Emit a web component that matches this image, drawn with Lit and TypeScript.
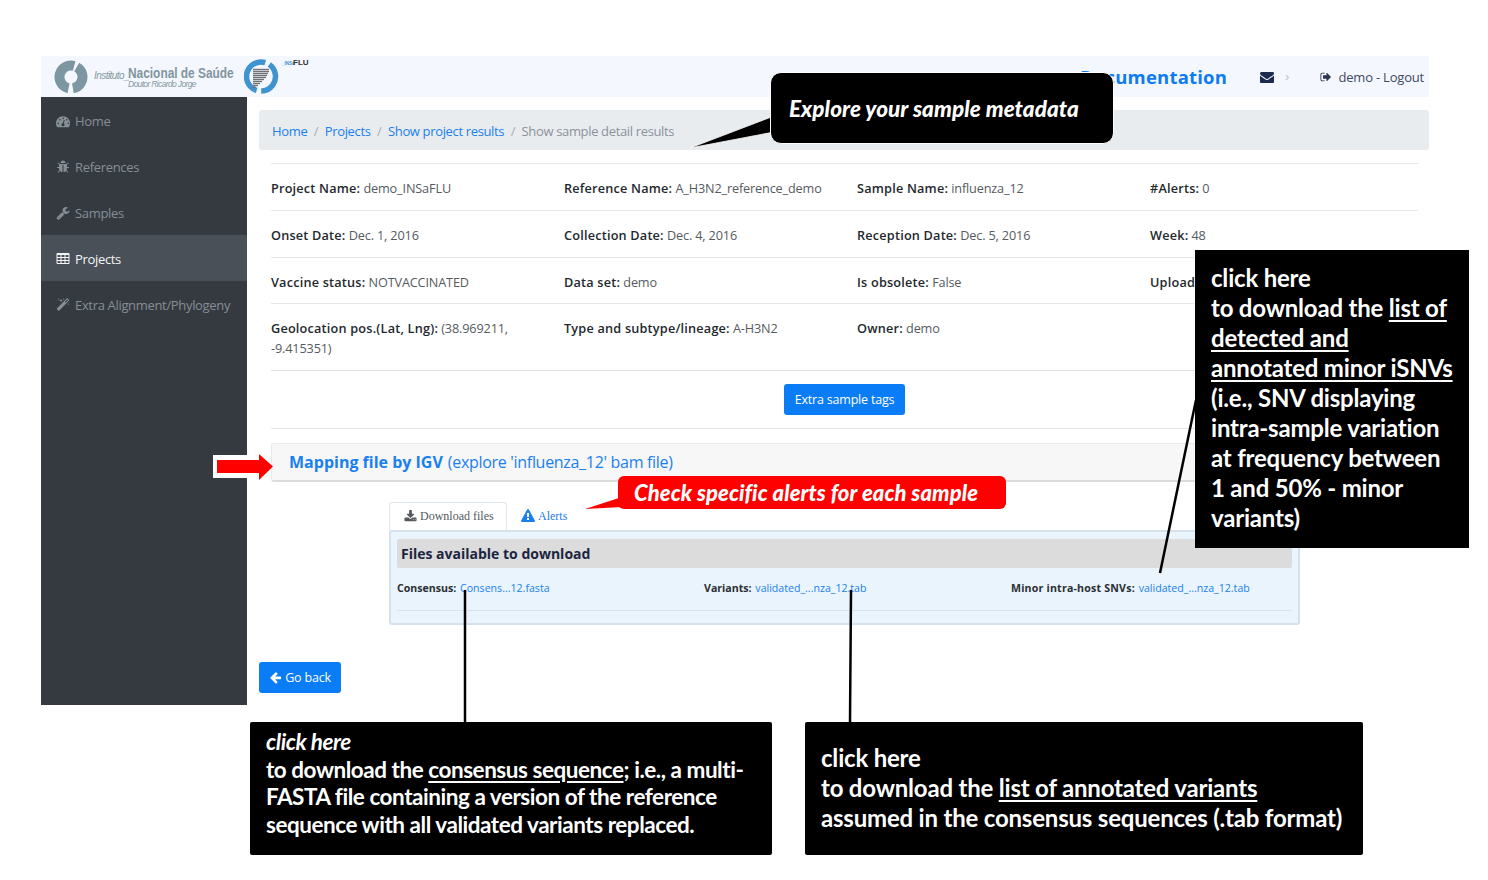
import { LitElement, html, css, svg } from "lit";
import { customElement } from "lit/decorators.js";

const P: Record<string, string> = {
  dashboard: "M384 1184q0-40-28-68t-68-28-68 28-28 68 28 68 68 28 68-28 28-68zm192-448q0-40-28-68t-68-28-68 28-28 68 28 68 68 28 68-28 28-68zm428 481l101-382q6-26-7.500-48.500t-38.500-29.500-48 6.500-30 39.500l-101 382q-60 5-107 43.500t-63 98.500q-20 77 20 146t117 89 146-20 89-117q16-60-6-117t-72-91zm660-33q0-40-28-68t-68-28-68 28-28 68 28 68 68 28 68-28 28-68zm-640-640q0-40-28-68t-68-28-68 28-28 68 28 68 68 28 68-28 28-68zm448 192q0-40-28-68t-68-28-68 28-28 68 28 68 68 28 68-28 28-68zm320 448q0 261-141 483-19 29-54 29h-1402q-35 0-54-29-141-221-141-483 0-182 71-348t191-286 286-191 348-71 348 71 286 191 191 286 71 348z",
  bug: "M1696 960q0 26-19 45t-45 19h-224q0 171-67 290l208 209q19 19 19 45t-19 45q-18 19-45 19t-45-19l-198-197q-5 5-15 13t-42 28.500-65 36.500-82 29-97 13v-896h-128v896q-51 0-101.500-13.500t-87-33-66-39-43.500-32.500l-15-14-183 207q-20 21-48 21-24 0-43-16-19-18-20.500-44.500t15.500-46.500l202-227q-58-114-58-274h-224q-26 0-45-19t-19-45 19-45 45-19h224v-294l-173-173q-19-19-19-45t19-45 45-19 45 19l173 173h844l173-173q19-19 45-19t45 19 19 45-19 45l-173 173v294h224q26 0 45 19t19 45zm-480-576h-640q0-133 93.500-226.500t226.500-93.500 226.500 93.500 93.500 226.500z",
  wrench: "M448 1472q0-26-19-45t-45-19-45 19-19 45 19 45 45 19 45-19 19-45zm644-420l-682 682q-37 37-90 37-52 0-91-37l-106-108q-38-36-38-90 0-53 38-91l681-681q39 98 114.500 173.500t173.500 114.500zm634-435q0 39-23 106-47 134-164.500 217.500t-258.500 83.500q-185 0-316.500-131.500t-131.500-316.500 131.500-316.500 316.500-131.500q58 0 121.500 16.500t107.500 46.500q16 11 16 28t-16 28l-293 169v224l193 107q5-3 79-48.500t135.500-81 70.500-35.500q15 0 23.500 10t8.500 25z",
  table: "M576 1376v-192q0-14-9-23t-23-9h-320q-14 0-23 9t-9 23v192q0 14 9 23t23 9h320q14 0 23-9t9-23zm0-384v-192q0-14-9-23t-23-9h-320q-14 0-23 9t-9 23v192q0 14 9 23t23 9h320q14 0 23-9t9-23zm512 384v-192q0-14-9-23t-23-9h-320q-14 0-23 9t-9 23v192q0 14 9 23t23 9h320q14 0 23-9t9-23zm-512-768v-192q0-14-9-23t-23-9h-320q-14 0-23 9t-9 23v192q0 14 9 23t23 9h320q14 0 23-9t9-23zm512 384v-192q0-14-9-23t-23-9h-320q-14 0-23 9t-9 23v192q0 14 9 23t23 9h320q14 0 23-9t9-23zm512 384v-192q0-14-9-23t-23-9h-320q-14 0-23 9t-9 23v192q0 14 9 23t23 9h320q14 0 23-9t9-23zm-512-768v-192q0-14-9-23t-23-9h-320q-14 0-23 9t-9 23v192q0 14 9 23t23 9h320q14 0 23-9t9-23zm512 384v-192q0-14-9-23t-23-9h-320q-14 0-23 9t-9 23v192q0 14 9 23t23 9h320q14 0 23-9t9-23zm0-384v-192q0-14-9-23t-23-9h-320q-14 0-23 9t-9 23v192q0 14 9 23t23 9h320q14 0 23-9t9-23zm128-320v1088q0 66-47 113t-113 47h-1344q-66 0-113-47t-47-113v-1088q0-66 47-113t113-47h1344q66 0 113 47t47 113z",
  magic: "M1254 581l293-293-107-107-293 293zm447-293q0 27-18 45l-1286 1286q-18 18-45 18t-45-18l-198-198q-18-18-18-45t18-45l1286-1286q18-18 45-18t45 18l198 198q18 18 18 45zm-1351-190l98 30-98 30-30 98-30-98-98-30 98-30 30-98zm350 162l196 60-196 60-60 196-60-196-196-60 196-60 60-196zm930 478l98 30-98 30-30 98-30-98-98-30 98-30 30-98zm-640-640l98 30-98 30-30 98-30-98-98-30 98-30 30-98z",
  envelope: "M1792 710v794q0 66-47 113t-113 47h-1472q-66 0-113-47t-47-113v-794q44 49 101 87 362 246 497 345 57 42 92.500 65.500t94.500 48 110 24.500h2q51 0 110-24.500t94.500-48 92.500-65.500q170-123 498-345 57-39 100-87zm0-294q0 79-49 151t-122 123q-376 261-468 325-10 7-42.500 30.500t-54 38-52 32.500-57.500 27-50 9h-2q-23 0-50-9t-57.500-27-52-32.500-54-38-42.500-30.500q-91-64-262-182.500t-205-142.500q-62-42-117-115.500t-55-136.500q0-78 41.500-130t118.500-52h1472q65 0 112.500 47t47.500 113z",
  signout: "M704 1440q0 4 1 20t.5 26.500-3 23.500-10 19.500-20.500 6.500h-320q-119 0-203.500-84.500t-84.500-203.500v-704q0-119 84.500-203.500t203.500-84.500h320q13 0 22.500 9.500t9.500 22.500q0 4 1 20t.5 26.500-3 23.500-10 19.500-20.500 6.500h-320q-66 0-113 47t-47 113v704q0 66 47 113t113 47h312l11.500 1 11.500 3 8 5.500 7 9 2 13.500zm928-544q0 26-19 45l-544 544q-19 19-45 19t-45-19-19-45v-288h-448q-26 0-45-19t-19-45v-384q0-26 19-45t45-19h448v-288q0-26 19-45t45-19 45 19l544 544q19 19 19 45z",
  download: "M1344 1344q0-26-19-45t-45-19-45 19-19 45 19 45 45 19 45-19 19-45zm256 0q0-26-19-45t-45-19-45 19-19 45 19 45 45 19 45-19 19-45zm128-224v320q0 40-28 68t-68 28h-1472q-40 0-68-28t-28-68v-320q0-40 28-68t68-28h465l135 136q58 56 136 56t136-56l136-136h464q40 0 68 28t28 68zm-325-569q17 41-14 70l-448 448q-18 19-45 19t-45-19l-448-448q-31-29-14-70 17-39 59-39h256v-448q0-26 19-45t45-19h256q26 0 45 19t19 45v448h256q42 0 59 39z",
  warning: "M1024 1375v-190q0-14-9.500-23.500t-22.500-9.500h-192q-13 0-22.500 9.500t-9.500 23.500v190q0 14 9.500 23.500t22.500 9.500h192q13 0 22.500-9.500t9.500-23.500zm-2-374l18-459q0-12-10-19-13-11-24-11h-220q-11 0-24 11-10 7-10 21l17 457q0 10 10 16.500t24 6.500h185q14 0 23.500-6.500t10.500-16.500zm-14-934l768 1408q35 63-2 126-17 29-46.500 46t-63.500 17h-1536q-34 0-63.500-17t-46.500-46q-37-63-2-126l768-1408q17-31 47-49t65-18 65 18 47 49z",
  arrowleft: "M1664 896v128q0 53-32.500 90.500t-84.500 37.500h-704l293 294q38 36 38 90t-38 90l-75 76q-37 37-90 37-52 0-91-37l-651-652q-37-37-37-90 0-52 37-91l651-650q38-38 91-38 52 0 90 38l75 74q38 38 38 91t-38 91l-293 293h704q52 0 84.500 37.500t32.500 90.500z",
};

const icon = (n: string, size = 14) =>
  html`<svg class="ic" width=${size} height=${size} viewBox="0 0 1792 1792" fill="currentColor">${svg`<path d=${P[n]}></path>`}</svg>`;

const rows: [string, string][][] = [
  [["Project Name:", "demo_INSaFLU"], ["Reference Name:", "A_H3N2_reference_demo"], ["Sample Name:", "influenza_12"], ["#Alerts:", "0"]],
  [["Onset Date:", "Dec. 1, 2016"], ["Collection Date:", "Dec. 4, 2016"], ["Reception Date:", "Dec. 5, 2016"], ["Week:", "48"]],
  [["Vaccine status:", "NOTVACCINATED"], ["Data set:", "demo"], ["Is obsolete:", "False"], ["Upload", ""]],
  [["Geolocation pos.(Lat, Lng):", "(38.969211, -9.415351)"], ["Type and subtype/lineage:", "A-H3N2"], ["Owner:", "demo"], ["", ""]],
];

const nav = [
  ["dashboard", "Home"],
  ["bug", "References"],
  ["wrench", "Samples"],
  ["table", "Projects"],
  ["magic", "Extra Alignment/Phylogeny"],
];

const stripes = [25, 25, 24, 23, 22, 20, 18, 16, 14, 12];

@customElement("app-root")
export class AppRoot extends LitElement {
  static styles = css`
    :host { display: block; position: relative; width: 1488px; height: 880px; background: #fff; overflow: hidden; font-family: "Open Sans", sans-serif; color: #3a3f45; }
    .ic { display: block; flex: none; }
    a { color: #1a80f0; text-decoration: none; }
    .app { position: absolute; left: 41px; top: 56px; width: 1388px; height: 649px; display: flex; flex-direction: column; }
    header { height: 41px; flex: none; background: #f5f7ff; display: flex; align-items: flex-start; }
    .logos { display: flex; align-items: flex-start; }
    .inst { width: 34px; height: 34px; margin: 4px 0 0 13px; flex: none; }
    .instxt { margin: 8px 0 0 6px; width: 144px; height: 30px; color: #83979f; font-family: "Liberation Sans", sans-serif; white-space: nowrap; flex: none; }
    .instxt .a { font-size: 10px; font-style: italic; letter-spacing: -.55px; margin-top: 6px; display: inline-block; vertical-align: top; width: 34px; }
    .instxt .b { font-size: 14.5px; font-weight: 700; display: inline-block; vertical-align: top; margin-top: 1px; transform: scaleX(.82); transform-origin: left; color: #7f959e; }
    .instxt .c { font-size: 8.5px; font-style: italic; letter-spacing: -.65px; display: block; margin: -3px 0 0 34px; }
    .flu { width: 66px; height: 38px; margin: 2px 0 0 6px; flex: none; }
    .hright { margin-left: auto; display: flex; align-items: center; height: 41px; padding-right: 5px; }
    .doc { font-size: 18.5px; font-weight: 700; color: #0d7bf2; letter-spacing: .2px; white-space: nowrap; }
    .env { color: #1b2a4e; margin-left: 33px; }
    .chev { color: #b9bfc9; font-size: 13px; margin: 0 31px 0 11px; font-family: "Liberation Sans", sans-serif; }
    .out { color: #2c3650; margin-right: 6px; }
    .user { font-size: 13px; color: #3e4a5e; white-space: nowrap; letter-spacing: -.2px; }
    .body { flex: 1; display: flex; min-height: 0; }
    nav { width: 206px; flex: none; background: #343a40; }
    .item { height: 46px; box-sizing: border-box; padding: 2px 0 0 15px; display: flex; align-items: center; gap: 5px; color: #868e96; font-size: 13px; letter-spacing: -.33px; white-space: nowrap; }
    .item.on { background: #495057; color: #f3f5f6; }
    main { flex: 1; min-width: 0; padding: 13px 0 0 12px; display: flex; flex-direction: column; }
    .crumb { height: 40px; box-sizing: border-box; padding: 2px 0 0 13px; background: #e9ecef; border-radius: 3px; display: flex; align-items: center; font-size: 13px; letter-spacing: -.35px; white-space: nowrap; flex: none; }
    .crumb i { font-style: normal; color: #a5acb3; margin: 0 6.5px; }
    .crumb span { color: #8b939a; }
    .details { margin: 13px 11px 0 12px; flex: none; }
    .row { display: grid; grid-template-columns: repeat(4, 293px); border-top: 1px solid #e6e8ea; padding: 14px 0 12px; font-size: 12.7px; line-height: 20px; color: #555b61; }
    .row:nth-child(3) { padding-bottom: 11px; }
    .row b { color: #23282d; font-weight: 600; letter-spacing: .2px; }
    .row .cell { padding-right: 20px; letter-spacing: -.15px; }
    .tags { border-top: 1px solid #dee2e6; border-bottom: 1px solid #e4e6e8; height: 57px; display: flex; justify-content: center; align-items: center; }
    .btn { background: #0a7cf5; color: #fff; border-radius: 3px; font-size: 12.5px; letter-spacing: -.2px; display: flex; align-items: center; justify-content: center; white-space: nowrap; }
    .tags .btn { width: 121px; height: 31px; }
    .mapping { margin: 14px 11px 0 12px; height: 39px; flex: none; box-sizing: border-box; background: #f7f7f7; border: 1px solid #e9e9e9; border-bottom: 2px solid #dcdcdc; border-radius: 3px; display: flex; align-items: center; padding-left: 17px; font-size: 16px; white-space: nowrap; }
    .mapping b { font-weight: 700; }
    .mapping span { margin-left: 5px; letter-spacing: -.3px; }
    .tabsec { margin: 20px 129px 0 130px; flex: none; }
    .tabs { display: flex; height: 28px; font-family: "Liberation Serif", serif; font-size: 12px; white-space: nowrap; }
    .tab { display: flex; align-items: center; gap: 3px; padding: 0 14px; box-sizing: border-box; }
    .tab.on { width: 118px; background: #fff; border: 1px solid #dfe5ec; border-bottom: 0; border-radius: 3px 3px 0 0; color: #55595e; }
    .tab.alt { color: #1a80f0; }
    .panel { height: 95px; box-sizing: border-box; background: #e9f4fd; border: 2px solid #d5e1ec; border-radius: 3px; padding: 7px 6px 0 6px; }
    .ptitle { height: 29px; box-sizing: border-box; padding: 0 0 1px 4px; background: #dcdcdc; border-radius: 2px; display: flex; align-items: center; font-size: 14px; font-weight: 700; color: #1b2540; }
    .files { display: grid; grid-template-columns: 307px 307px 1fr; height: 43px; box-sizing: border-box; padding-bottom: 2px; align-items: center; border-bottom: 1px solid #d8e2ec; font-size: 10.6px; white-space: nowrap; color: #2a2f33; }
    .files b { font-weight: 700; }
    .files div:nth-child(3) b { letter-spacing: .2px; }
    .files a { margin-left: 1px; }
    .back { margin-top: 37px; width: 82px; height: 31px; gap: 3px; flex: none; }

    .note { position: absolute; background: #000; color: #fff; font-family: Lato, sans-serif; font-weight: 700; white-space: nowrap; box-sizing: border-box; }
    .note div { height: var(--lh); line-height: var(--lh); }
    .note u { text-underline-offset: 3px; }
    .n1 { left: 1195px; top: 250px; width: 274px; height: 298px; padding: 13px 0 0 16px; --lh: 30px; font-size: 24px; letter-spacing: -.2px; }
    .n2 { left: 250px; top: 722px; width: 522px; height: 133px; padding: 6px 0 0 16px; --lh: 27.6px; border-radius: 2px; font-size: 22.5px; letter-spacing: -.46px; }
    .n3 { left: 805px; top: 722px; width: 558px; height: 133px; padding: 21px 0 0 16px; --lh: 30px; border-radius: 2px; font-size: 24px; letter-spacing: -.2px; }
    .over { position: absolute; left: 0; top: 0; pointer-events: none; }
    .callout { position: absolute; display: flex; align-items: center; font-family: Lato, sans-serif; font-style: italic; font-weight: 900; color: #fff; white-space: nowrap; box-sizing: border-box; }
    .c1 { left: 770px; top: 72px; width: 344px; height: 72px; background: #000; border: 1px solid #fff; border-radius: 11px; padding-left: 18px; font-size: 22.5px; letter-spacing: .05px; }
    .c2 { left: 618px; top: 476px; width: 388px; height: 33px; background: #f00; border-radius: 6px; padding-left: 16px; font-size: 22px; letter-spacing: .1px; }
  `;

  render() {
    return html`
      <div class="app">
        <header>
          <div class="logos">
            <svg class="inst" viewBox="0 0 34 34" fill="none">
              <circle cx="17" cy="17" r="11.500" stroke="#7d97a2" stroke-width="10" pathLength="100" stroke-dasharray="39 6 51 4" transform="rotate(-60 17 17)"></circle>
            </svg>
            <div class="instxt">
              <span class="a">Instituto_</span><span class="b">Nacional de Saúde</span>
              <span class="c">Doutor Ricardo Jorge</span>
            </div>
            <svg class="flu" viewBox="0 0 66 38" fill="none">
              <circle cx="17" cy="18.500" r="14.500" stroke="#3f93d0" stroke-width="5.500" pathLength="100" stroke-dasharray="40 5 50 5" transform="rotate(-55 17 18.500)"></circle>
              ${stripes.map((x, i) => svg`<path d="M9 ${11.5 + i * 2}H${x}" stroke="#6f7478" stroke-width="1.400"></path>`)}
              <text x="38" y="7" font-family="Liberation Sans, sans-serif" font-size="4.500" font-weight="700" fill="#3f93d0">_INSa</text>
              <text x="49" y="7" font-family="Liberation Sans, sans-serif" font-size="8" font-weight="700" fill="#333">FLU</text>
            </svg>
          </div>
          <div class="hright">
            <span class="doc">Documentation</span>
            <span class="env">${icon("envelope", 14)}</span>
            <span class="chev">›</span>
            <span class="out">${icon("signout", 12)}</span>
            <span class="user">demo - Logout</span>
          </div>
        </header>
        <div class="body">
          <nav>
            ${nav.map(([i, t]) => html`<div class="item ${t === "Projects" ? "on" : ""}">${icon(i, 14)}<span>${t}</span></div>`)}
          </nav>
          <main>
            <div class="crumb">
              <a href="#">Home</a><i>/</i><a href="#">Projects</a><i>/</i><a href="#">Show project results</a><i>/</i><span>Show sample detail results</span>
            </div>
            <div class="details">
              ${rows.map((r) => html`<div class="row">${r.map(([k, v]) => html`<div class="cell">${k ? html`<b>${k}</b> ${v}` : ""}</div>`)}</div>`)}
              <div class="tags"><a class="btn" href="#">Extra sample tags</a></div>
            </div>
            <div class="mapping">
              <a href="#"><b>Mapping file by IGV</b></a><a href="#"><span>(explore 'influenza_12' bam file)</span></a>
            </div>
            <div class="tabsec">
              <div class="tabs">
                <div class="tab on">${icon("download", 13)}<span>Download files</span></div>
                <div class="tab alt">${icon("warning", 14)}<span>Alerts</span></div>
              </div>
              <div class="panel">
                <div class="ptitle">Files available to download</div>
                <div class="files">
                  <div><b>Consensus:</b> <a href="#">Consens...12.fasta</a></div>
                  <div><b>Variants:</b> <a href="#">validated_...nza_12.tab</a></div>
                  <div><b>Minor intra-host SNVs:</b> <a href="#">validated_...nza_12.tab</a></div>
                </div>
              </div>
            </div>
            <a class="btn back" href="#">${icon("arrowleft", 13)}<span>Go back</span></a>
          </main>
        </div>
      </div>

      <svg class="over" width="1488" height="880" fill="none">
        <polygon points="774,116 690,148 774,132" fill="#000" stroke="#fff" stroke-width=".8"></polygon>
        <polygon points="622,497 585,509 622,507" fill="#f00"></polygon>
        <rect x="213" y="455" width="46" height="23" fill="#fff"></rect>
        <polygon points="217,460 259,460 259,454 273,466.500 259,480 259,473 217,473" fill="#f00"></polygon>
        <path d="M465 590V722M851 590L850 722" stroke="#000" stroke-width="2.500"></path>
        <path d="M1196 400L1160 573" stroke="#000" stroke-width="2.500"></path>
      </svg>

      <div class="callout c1">Explore your sample metadata</div>
      <div class="callout c2">Check specific alerts for each sample</div>

      <div class="note n1">
        <div>click here</div>
        <div>to download the <u>list of</u></div>
        <div><u>detected and</u></div>
        <div><u>annotated minor iSNVs</u></div>
        <div>(i.e., SNV displaying</div>
        <div>intra-sample variation</div>
        <div>at frequency between</div>
        <div>1 and 50% - minor</div>
        <div>variants)</div>
      </div>
      <div class="note n2">
        <div><em>click here</em></div>
        <div>to download the <u>consensus sequence</u>; i.e., a multi-</div>
        <div>FASTA file containing a version of the reference</div>
        <div>sequence with all validated variants replaced.</div>
      </div>
      <div class="note n3">
        <div>click here</div>
        <div>to download the <u>list of annotated variants</u></div>
        <div>assumed in the consensus sequences (.tab format)</div>
      </div>
    `;
  }
}
